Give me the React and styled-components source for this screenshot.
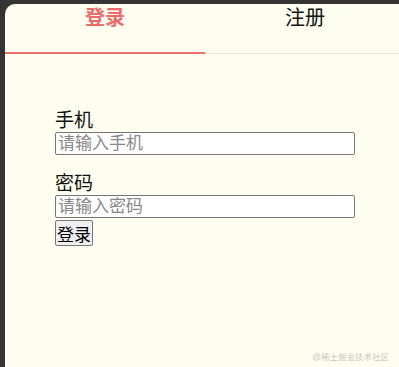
import React, { useState } from 'react'
import styled, { createGlobalStyle } from 'styled-components'

const GlobalStyle = createGlobalStyle`
  html, body {
    margin: 0;
    padding: 0;
    background: #343434;
  }
  body {
    font-family: "Liberation Sans", "Noto Sans CJK SC", sans-serif;
  }
`;

const Screen = styled.div`
  width: 399px;
  height: 367px;
  padding: 4px 0 0 5px;
  box-sizing: border-box;
  display: flex;
  overflow: hidden;
`;

const Card = styled.div`
  flex: 0 0 400px;
  position: relative;
  background: #fefef0;
  border-top-left-radius: 10px;
  display: flex;
  flex-direction: column;
`;

const Tabs = styled.div`
  display: flex;
  border-bottom: 1px solid #e6e6dc;
  height: 49px;
`;

const Tab = styled.div`
  flex: 0 0 200px;
  text-align: center;
  font-size: 20px;
  line-height: 24px;
  padding-top: 2px;
  font-weight: ${p => (p.active ? 'bold' : 'normal')};
  color: ${p => (p.active ? '#ee6a6a' : '#111')};
  border-bottom: 2px solid ${p => (p.active ? '#ec6f6c' : 'transparent')};
  margin-bottom: -1px;
  cursor: pointer;
`;

const Form = styled.form`
  display: flex;
  flex-direction: column;
  align-items: flex-start;
  padding: 55px 0 0 50px;
`;

const Field = styled.div`
  display: flex;
  flex-direction: column;
  align-items: flex-start;
  margin-bottom: ${p => (p.last ? '0' : '17px')};
`;

const Label = styled.label`
  font-size: 19px;
  line-height: 23px;
  color: #111;
`;

const Input = styled.input`
  width: 300px;
  height: 23px;
  box-sizing: border-box;
  margin: 0;
  padding: 0 2px;
  font-size: 17px;
  font-family: "Liberation Sans", "Noto Sans CJK SC", sans-serif;
  border: 1px solid #767676;
  border-radius: 2px;
  background: #fff;

  &::placeholder {
    color: #888;
  }
`;

const Button = styled.button`
  margin-top: 2px;
  height: 26px;
  padding: 0 1px;
  font-size: 17px;
  font-family: "Liberation Sans", "Noto Sans CJK SC", sans-serif;
  color: #000;
  background: #efefef;
  border: 1px solid #767676;
  border-radius: 2px;
`;

const Watermark = styled.div`
  position: absolute;
  right: 16px;
  bottom: 5px;
  font-size: 8.5px;
  color: #c8c8c0;
`;

export default function App() {
  const [tab, setTab] = useState('login');

  return (
    <Screen>
      <GlobalStyle />
      <Card>
        <Tabs>
          <Tab active={tab === 'login'} onClick={() => setTab('login')}>登录</Tab>
          <Tab active={tab === 'register'} onClick={() => setTab('register')}>注册</Tab>
        </Tabs>
        <Form onSubmit={e => e.preventDefault()}>
          <Field>
            <Label htmlFor="phone">手机</Label>
            <Input id="phone" type="text" placeholder="请输入手机" />
          </Field>
          <Field last>
            <Label htmlFor="password">密码</Label>
            <Input id="password" type="password" placeholder="请输入密码" />
          </Field>
          <Button type="submit">登录</Button>
        </Form>
        <Watermark>@稀土掘金技术社区</Watermark>
      </Card>
    </Screen>
  )
}
